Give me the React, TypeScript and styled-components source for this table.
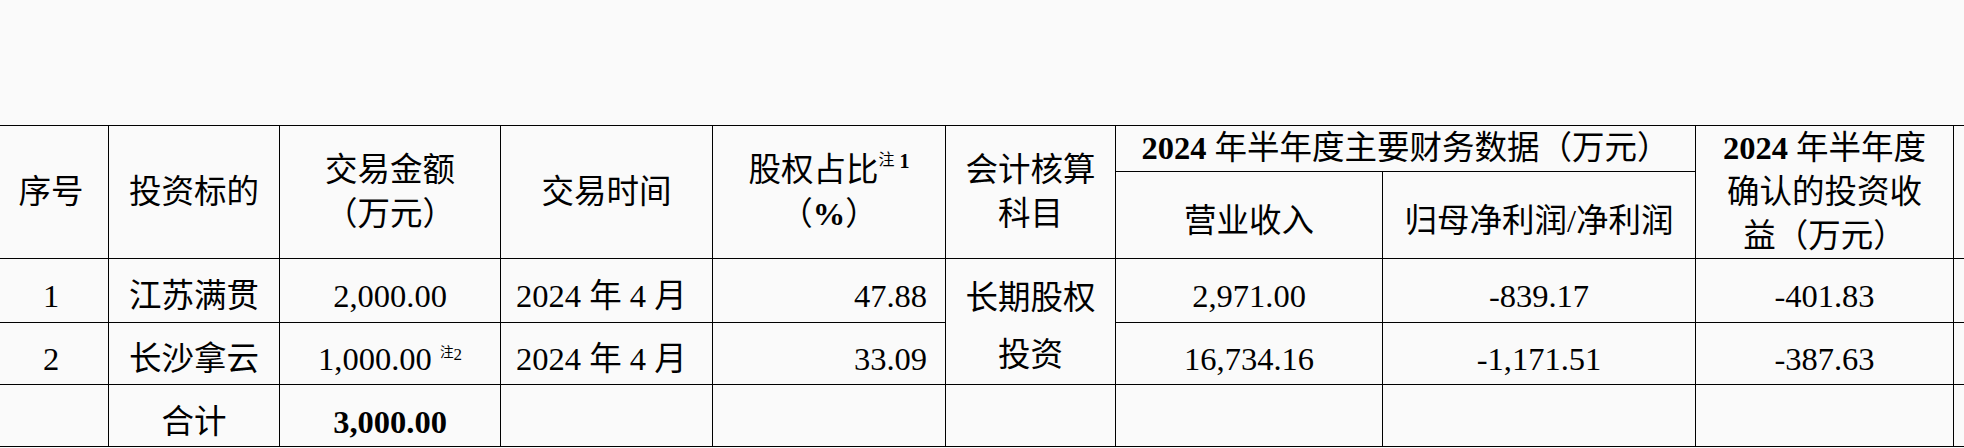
import React from "react";
import styled, { createGlobalStyle } from "styled-components";

const Global = createGlobalStyle`
  html, body {
    margin: 0;
    padding: 0;
    background: #fafafa;
    overflow: hidden;
  }
  body {
    font-family: "Liberation Serif", "Noto Sans CJK SC", serif;
    color: #000;
  }
`;

const Page = styled.div`
  width: 1964px;
  height: 448px;
  overflow: hidden;
  padding-top: 125px;
  box-sizing: border-box;
`;

const Table = styled.table`
  border-collapse: collapse;
  table-layout: fixed;
  width: 2080px;
  margin-left: -7px;
  font-family: "Liberation Serif", "Noto Sans CJK SC", serif;
  font-size: 32.5px;
  color: #000;
`;

const Row = styled.tr<{ $h: number }>`
  height: ${(p) => p.$h}px;
`;

const Head = styled.th<{ $lh?: number; $pt?: number }>`
  border: 1px solid #000;
  padding: ${(p) => p.$pt ?? 0}px 0 0;
  font-weight: 400;
  text-align: center;
  vertical-align: middle;
  line-height: ${(p) => p.$lh ?? 44}px;
  white-space: nowrap;
`;

type Align = "left" | "center" | "right";

const Cell = styled.td<{ $align?: Align; $lh?: number; $pt?: number }>`
  border: 1px solid #000;
  padding-top: ${(p) => p.$pt ?? 12}px;
  padding-bottom: 0;
  padding-left: ${(p) => (p.$align === "left" ? 15 : 0)}px;
  padding-right: ${(p) => (p.$align === "right" ? 18 : 0)}px;
  text-align: ${(p) => p.$align ?? "center"};
  vertical-align: middle;
  line-height: ${(p) => p.$lh ?? 36}px;
  white-space: nowrap;
`;

const B = styled.span`
  font-weight: 700;
`;

const Sup = styled.span<{ $raise: number; $size: number }>`
  font-size: ${(p) => p.$size}px;
  line-height: 0;
  vertical-align: ${(p) => p.$raise}px;
`;

const Note = styled.span`
  font-size: 0.8em;
  vertical-align: 0.2em;
`;

const widths = [115, 171, 221, 212, 233, 170, 267, 313, 258, 120];

type DataRow = {
  no: string;
  name: string;
  amount: React.ReactNode;
  time: string;
  share: string;
  revenue: string;
  profit: string;
  income: string;
};

const rows: DataRow[] = [
  {
    no: "1",
    name: "江苏满贯",
    amount: "2,000.00",
    time: "2024 年 4 月",
    share: "47.88",
    revenue: "2,971.00",
    profit: "-839.17",
    income: "-401.83",
  },
  {
    no: "2",
    name: "长沙拿云",
    amount: (
      <>
        1,000.00{" "}
        <Sup $raise={10} $size={17}>
          <Note>注</Note>2
        </Sup>
      </>
    ),
    time: "2024 年 4 月",
    share: "33.09",
    revenue: "16,734.16",
    profit: "-1,171.51",
    income: "-387.63",
  },
];

export default function App() {
  return (
    <>
      <Global />
      <Page>
        <Table>
          <colgroup>
            {widths.map((w, i) => (
              <col key={i} style={{ width: w }} />
            ))}
          </colgroup>
          <thead>
            <Row $h={45}>
              <Head rowSpan={2}>序号</Head>
              <Head rowSpan={2}>投资标的</Head>
              <Head rowSpan={2}>
                交易金额
                <br />
                （万元）
              </Head>
              <Head rowSpan={2}>交易时间</Head>
              <Head rowSpan={2}>
                股权占比
                <Sup $raise={13} $size={20}>
                  <Note>注</Note> <B>1</B>
                </Sup>
                <br />
                （<B>%</B>）
              </Head>
              <Head rowSpan={2}>
                会计核算
                <br />
                科目
              </Head>
              <Head colSpan={2}>
                <B>2024</B> 年半年度主要财务数据（万元）
              </Head>
              <Head rowSpan={2}>
                <B>2024</B> 年半年度
                <br />
                确认的投资收
                <br />
                益（万元）
              </Head>
              <Head rowSpan={2} />
            </Row>
            <Row $h={86}>
              <Head $pt={12}>营业收入</Head>
              <Head $pt={12}>归母净利润/净利润</Head>
            </Row>
          </thead>
          <tbody>
            {rows.map((r, i) => (
              <Row key={r.no} $h={i === 0 ? 61 : 60}>
                <Cell>{r.no}</Cell>
                <Cell>{r.name}</Cell>
                <Cell>{r.amount}</Cell>
                <Cell $align="left">{r.time}</Cell>
                <Cell $align="right">{r.share}</Cell>
                {i === 0 && (
                  <Cell rowSpan={2} $lh={57} $pt={11}>
                    长期股权
                    <br />
                    投资
                  </Cell>
                )}
                <Cell>{r.revenue}</Cell>
                <Cell>{r.profit}</Cell>
                <Cell>{r.income}</Cell>
                <Cell />
              </Row>
            ))}
            <Row $h={62}>
              <Cell />
              <Cell>合计</Cell>
              <Cell>
                <B>3,000.00</B>
              </Cell>
              <Cell />
              <Cell />
              <Cell />
              <Cell />
              <Cell />
              <Cell />
              <Cell />
            </Row>
          </tbody>
        </Table>
      </Page>
    </>
  );
}
